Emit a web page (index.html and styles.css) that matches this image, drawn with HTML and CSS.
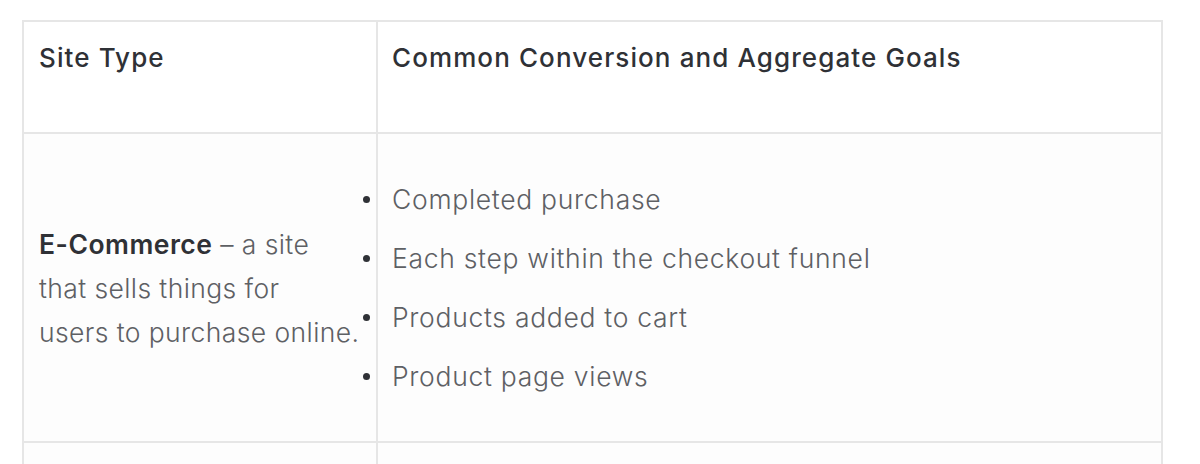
FILE: index.html
```html
<!DOCTYPE html>
<html lang="en">
<head>
<meta charset="utf-8">
<title>Site Type Goals</title>
<link rel="stylesheet" href="styles.css">
</head>
<body>
<!--goals table-->
<table class="goals">
    <thead>
        <tr>
            <th class="type">Site Type</th>
            <th class="list">Common Conversion and Aggregate Goals</th>
        </tr>
    </thead>
    <tbody>
        <tr class="row">
            <td class="type"><strong>E-Commerce</strong> &ndash; a site<br>that sells things for<br>users to purchase online.</td>
            <td class="list">
                <ul>
                    <li>Completed purchase</li>
                    <li>Each step within the checkout funnel</li>
                    <li>Products added to cart</li>
                    <li>Product page views</li>
                </ul>
            </td>
        </tr>
        <tr class="row next">
            <td class="type"></td>
            <td class="list"></td>
        </tr>
    </tbody>
</table>
</body>
</html>
```
FILE: styles.css
```css
/*reset*/
body,ul,li{margin:0; padding:0;}
body{background:#fff; font-family:Inter, "Noto Sans", sans-serif; padding:20px 0 0 22px;}
/*table*/
.goals{width:1141px; border-collapse:collapse; table-layout:fixed;}
.goals th,.goals td{border:2px solid #e6e6e6; text-align:left; padding:0 14px;}
.goals .type{padding:0 2px 0 15px;}
.goals th{height:96px; vertical-align:top; padding-top:14px; font-size:26px; font-weight:500; letter-spacing:1.1px; color:#2f3136; line-height:44px;}
.goals th.type{width:335px; padding-top:14px;}
.goals td{height:307px; vertical-align:middle; font-size:26.5px; font-weight:300; letter-spacing:0.7px; color:#5e6064; line-height:44px; background:#fdfdfd;}
.goals td.type{letter-spacing:0.4px; white-space:nowrap;}
.goals td strong{font-weight:600; color:#2f3136; letter-spacing:0.5px;}
.goals ul{list-style:none; padding:0;}
.goals li{margin:15px 0; line-height:44px; position:relative;}
/*bullet sits over the column line*/
.goals li::before{content:""; position:absolute; left:-29px; top:19px; width:7px; height:7px; border-radius:50%; background:#2f3136;}
.next td{height:40px;}
```
